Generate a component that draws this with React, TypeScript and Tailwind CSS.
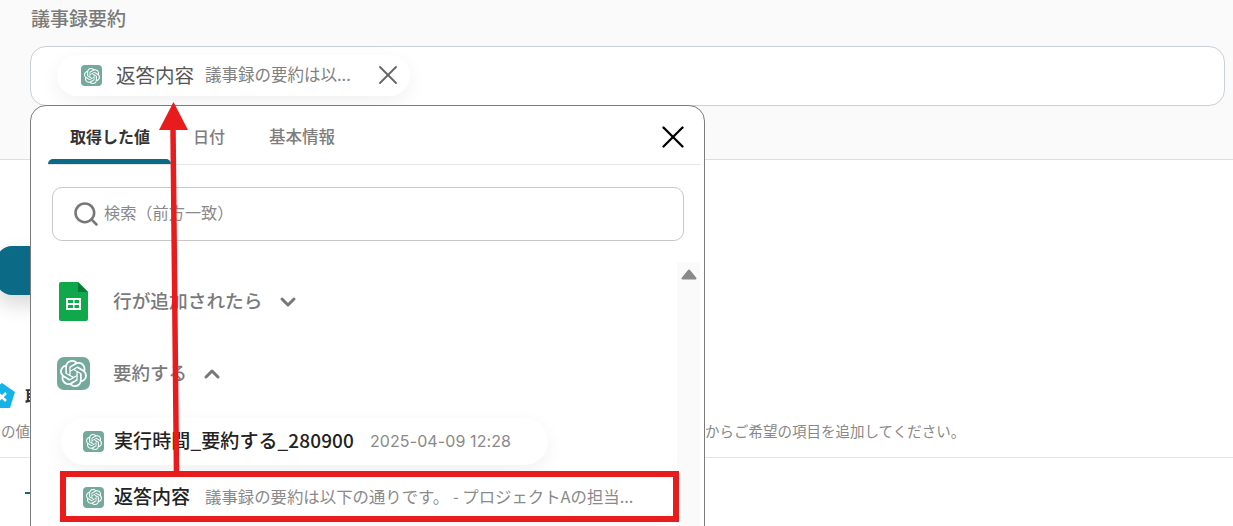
import { SiOpenai } from "react-icons/si";
import { X, Search, ChevronDown, ChevronUp } from "lucide-react";

const GptIcon = ({ box, glyph }: { box: string; glyph: string }) => (
  <span className={`${box} shrink-0 flex items-center justify-center bg-[#74aa9c] text-white`}>
    <SiOpenai className={glyph} />
  </span>
);

const SheetsIcon = () => (
  <svg width="29" height="39" viewBox="0 0 29 39" className="shrink-0">
    <path d="M2 0H19L29 10V37a2 2 0 0 1-2 2H2a2 2 0 0 1-2-2V2a2 2 0 0 1 2-2z" fill="#0fa94b" />
    <path d="M19 0L29 10H19z" fill="#0a7a38" />
    <path d="M7 16H22V28H7z M9 18V21H14V18z M15.500 18V21H20V18z M9 23V26H14V23z M15.500 23V26H20V23z" fill="#fff" fillRule="evenodd" />
  </svg>
);

const Arrow = () => (
  <svg width="40" height="380" viewBox="0 0 40 380" className="absolute left-[154px] top-[100px] z-30">
    <path d="M19 28L22.500 374" stroke="#e81c1c" strokeWidth="5.500" fill="none" />
    <path d="M19.500 2L5 30H34z" fill="#e81c1c" />
  </svg>
);

const Popup = () => (
  <div className="absolute left-[30px] top-[105px] z-10 w-[675px] h-[460px] rounded-t-[16px] border border-[#7c7c7c] bg-white">
    <div className="relative ml-[17px] mr-[4px] h-[59px] flex items-end border-b border-[#e6e6e6] pb-[16px]">
      <div className="absolute left-0 bottom-0 h-[5px] w-[123px] rounded-t-[5px] bg-[#0b6a85]" />
      <span className="ml-[22px] text-[16px] leading-[24px] font-bold text-[#333]">取得した値</span>
      <span className="ml-[43px] text-[16px] leading-[24px] font-medium text-[#7d7d7d]">日付</span>
      <span className="ml-[44px] text-[16.500px] leading-[24px] font-medium text-[#7d7d7d]">基本情報</span>
      <X className="absolute right-[8px] top-[12px] text-black" size={38} strokeWidth={1.500} />
    </div>
    <div className="ml-[21px] mr-[20px] mt-[22px] h-[54px] flex items-center rounded-[10px] border border-[#c8c8c8] pl-[19px]">
      <Search size={28} strokeWidth={2.200} className="text-[#777]" />
      <span className="ml-[4px] -mt-[3px] text-[16.200px] text-[#8a8a8a]">検索（前方一致）</span>
    </div>
    <div className="absolute right-[4px] top-[156px] h-[300px] w-[23px] bg-[#fafafa] flex justify-center pt-[7px]">
      <svg width="16" height="11" viewBox="0 0 16 11">
        <path d="M8 1.500L14.500 9.500H1.500z" fill="#8a8a8a" stroke="#8a8a8a" strokeWidth="2" strokeLinejoin="round" />
      </svg>
    </div>
    <div className="ml-[28px] mt-[41px] flex items-center h-[39px]">
      <SheetsIcon />
      <span className="ml-[25px] -mt-[2px] text-[18.700px] font-medium text-[#7a7a7a]">行が追加されたら</span>
      <ChevronDown className="ml-[13px] text-[#777]" size={24} strokeWidth={3} />
    </div>
    <div className="ml-[26px] mt-[36px] flex items-center h-[33px]">
      <GptIcon box="w-[33px] h-[33px] rounded-[7px]" glyph="w-[27px] h-[27px]" />
      <span className="ml-[23px] -mt-[2px] text-[18.500px] font-medium text-[#7a7a7a]">要約する</span>
      <ChevronUp className="ml-[13px] text-[#777]" size={24} strokeWidth={3} />
    </div>
    <div className="ml-[30px] mt-[28px] h-[47px] w-[487px] flex items-center rounded-full bg-white pl-[22px] shadow-[0_6px_20px_rgba(0,0,0,0.06)]">
      <GptIcon box="w-[21px] h-[21px] rounded-[4px]" glyph="w-[16px] h-[16px]" />
      <span className="ml-[10px] -mt-[2px] text-[19px] font-medium tracking-[0.1px] text-[#222]">実行時間_要約する_280900</span>
      <span className="ml-[16px] -mt-[2px] text-[16px] tracking-[0.1px] text-[#8a8a8a] font-['Inter','Noto_Sans',sans-serif]">2025-04-09 12:28</span>
    </div>
    <div className="ml-[33px] mt-[12px] h-[40px] w-[613px] flex items-center rounded-full bg-white pl-[19px] shadow-[0_6px_20px_rgba(0,0,0,0.06)]">
      <GptIcon box="w-[21px] h-[21px] rounded-[4px]" glyph="w-[16px] h-[16px]" />
      <span className="ml-[10px] -mt-[2px] text-[19px] font-medium text-[#222]">返答内容</span>
      <span className="ml-[15px] -mt-[2px] text-[16.400px] text-[#8a8a8a]">議事録の要約は以下の通りです。 - プロジェクトAの担当...</span>
    </div>
  </div>
);

export default function App() {
  return (
    <div className="relative h-[526px] w-[1233px] overflow-hidden bg-white font-['Noto_Sans_CJK_JP','Noto_Sans',sans-serif]">
      <div className="h-[160px] border-b border-[#dedede] bg-[#fafafa] pl-[30px] pr-[8px]">
        <div className="h-[46px] pt-[4px] pl-px text-[19px] leading-[28px] font-medium text-[#7a7a7a]">議事録要約</div>
        <div className="h-[60px] rounded-[16px] border border-[#c9d0d6] bg-white pl-[26px] pt-[8px]">
          <div className="h-[41px] w-[353px] flex items-center rounded-full bg-white pl-[24px] shadow-[0_6px_20px_rgba(0,0,0,0.06)]">
            <GptIcon box="w-[21px] h-[21px] rounded-[4px]" glyph="w-[16px] h-[16px]" />
            <span className="ml-[14px] -mt-[2px] text-[19.500px] text-[#555]">返答内容</span>
            <span className="ml-[11px] -mt-[2px] text-[16.500px] text-[#808080]">議事録の要約は以...</span>
            <X className="ml-[21px] -mt-px text-[#666]" size={32} strokeWidth={1.400} />
          </div>
        </div>
      </div>
      <div className="mt-[86px] -ml-[4px] h-[49px] w-[200px] rounded-[16px] bg-[#0b6a85] shadow-[0_10px_20px_rgba(0,0,0,0.15)]" />
      <div className="mt-[88px] -ml-[11px] h-[26px] flex items-center">
        <svg width="27" height="26" viewBox="0 0 27 26">
          <path d="M13 0L26 9L21 25H5L0 9z" fill="#14b4e8" />
          <path d="M9 10L17 18M17 10L9 18" stroke="#fff" strokeWidth="2.500" />
        </svg>
        <span className="ml-[9px] text-[17px] font-bold text-[#333]">取</span>
      </div>
      <div className="mt-[10px] flex h-[24px] items-center text-[14.500px] text-[#888]">
        <span className="w-[30px] shrink-0 text-right whitespace-nowrap">の値</span>
        <span className="ml-[675px]">からご希望の項目を追加してください。</span>
      </div>
      <div className="mt-[14px] border-t border-[#e4e4e4]" />
      <div className="ml-[25px] mt-[34px] h-[2px] w-[6px] bg-[#0b6a85]" />
      <Popup />
      <div className="absolute left-[60px] top-[471px] z-20 h-[51px] w-[619px] border-[6px] border-[#e81c1c]" />
      <Arrow />
    </div>
  );
}
